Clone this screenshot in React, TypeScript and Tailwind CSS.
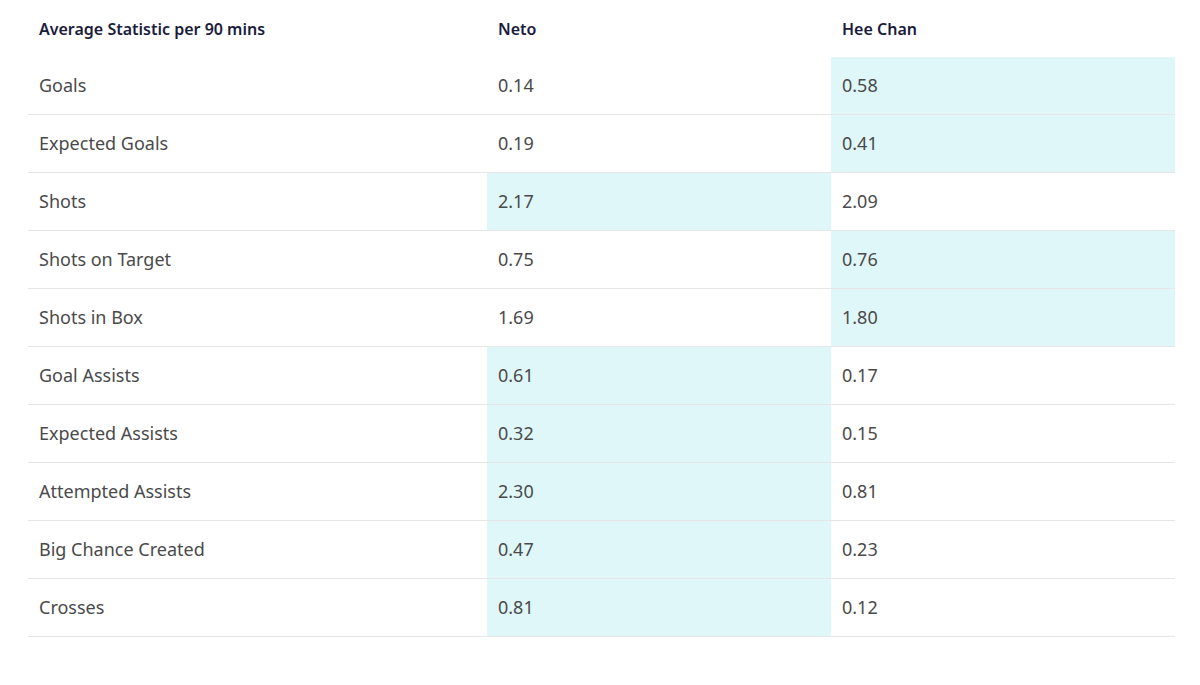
const rows: [string, string, string, number][] = [
  ["Goals", "0.14", "0.58", 2],
  ["Expected Goals", "0.19", "0.41", 2],
  ["Shots", "2.17", "2.09", 1],
  ["Shots on Target", "0.75", "0.76", 2],
  ["Shots in Box", "1.69", "1.80", 2],
  ["Goal Assists", "0.61", "0.17", 1],
  ["Expected Assists", "0.32", "0.15", 1],
  ["Attempted Assists", "2.30", "0.81", 1],
  ["Big Chance Created", "0.47", "0.23", 1],
  ["Crosses", "0.81", "0.12", 1],
];

export default function App() {
  return (
    <div className="w-[1200px] h-[685px] bg-white" style={{ fontFamily: "'Noto Sans', sans-serif" }}>
      <div className="ml-[28px] w-[1147px]">
        <div className="grid grid-cols-[459px_344px_344px] h-[57px] items-center text-[16px] font-semibold text-[#1b1c3c]">
          <div className="pl-[11px]">Average Statistic per 90 mins</div>
          <div className="pl-[11px]">Neto</div>
          <div className="pl-[11px]">Hee Chan</div>
        </div>
        {rows.map(([l, a, b, h]) => (
          <div key={l} className="grid grid-cols-[459px_344px_344px] h-[58px] border-b border-[#e6e6e6] text-[18px] text-[#4a4a4a]">
            <div className="pl-[11px] flex items-center">{l}</div>
            <div className={`pl-[11px] flex items-center ${h === 1 ? "bg-[#e0f7fa]" : ""}`}>{a}</div>
            <div className={`pl-[11px] flex items-center ${h === 2 ? "bg-[#e0f7fa]" : ""}`}>{b}</div>
          </div>
        ))}
      </div>
    </div>
  );
}
